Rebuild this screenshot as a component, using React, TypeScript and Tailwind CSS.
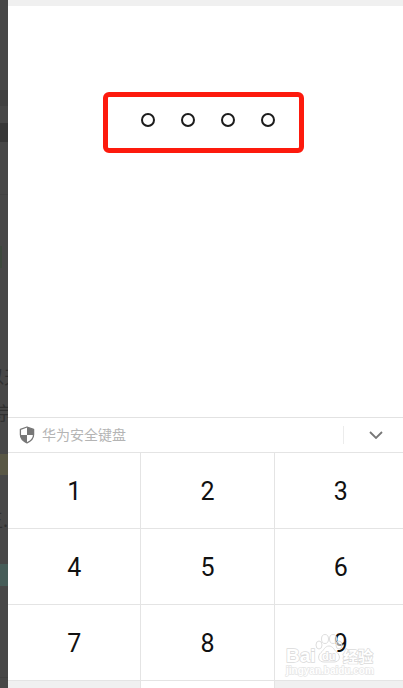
import React, { useState } from "react";

const KEYS = ["1", "2", "3", "4", "5", "6", "7", "8", "9"];
const CODE_LENGTH = 4;

const ShieldIcon: React.FC = () => (
  <svg viewBox="0 0 16 18" className="h-[18px] w-4" aria-hidden="true">
    <path d="M8 1 1.4 3.4v5.2c0 3.8 2.8 6.6 6.6 8.2 3.8-1.6 6.6-4.4 6.6-8.2V3.4z" fill="#fff" stroke="#777" strokeWidth="1.3" strokeLinejoin="round" />
    <path d="M8 1v8h6.6V3.4z" fill="#777" />
    <path d="M8 9v7.8C4.2 15.2 1.5 12.5 1.4 9z" fill="#777" />
  </svg>
);

const Watermark: React.FC = () => (
  <svg viewBox="0 0 96 46" className="pointer-events-none absolute right-6 bottom-2 h-[46px] w-24" aria-hidden="true">
    <g fill="#fff" fillOpacity="0.6" stroke="#dedede" strokeWidth="1">
      <ellipse cx="36" cy="11" rx="3" ry="4" />
      <ellipse cx="42" cy="5" rx="3.5" ry="4.5" />
      <ellipse cx="50" cy="5" rx="3.5" ry="4.5" />
      <ellipse cx="56" cy="11" rx="3" ry="4" />
      <path d="M46 12c-4 0-5 4-8 6.500-4 3.500-3 9.500 3 9.500h10c6 0 7-6 3-9.500C51 16 50 12 46 12z" />
    </g>
    <g fill="#fff" stroke="#dadada" strokeWidth="1.4" paintOrder="stroke" fontWeight="bold">
      <text x="3" y="28" fontSize="19" fontFamily="Liberation Sans, sans-serif">Bai</text>
      <text x="39" y="26" fontSize="11" fontFamily="Liberation Sans, sans-serif">du</text>
      <text x="60" y="28" fontSize="15" fontFamily="Noto Sans CJK SC, sans-serif">经验</text>
      <text x="3" y="40" fontSize="10" fontFamily="Liberation Sans, sans-serif" stroke="#e6e6e6">jingyan.baidu.com</text>
    </g>
  </svg>
);

// Franja de la página que queda detrás, oscurecida
const BackPage: React.FC = () => (
  <aside aria-hidden="true" className="w-2 shrink-0 overflow-hidden bg-[#474747] font-['Noto_Sans_CJK_SC',sans-serif] text-[#303030]">
    <div className="h-[90px]" />
    <div className="h-4 bg-[#414141]" />
    <div className="h-[17px]" />
    <div className="h-[19px] bg-[#373737]" />
    <div className="h-[53px] border-b border-[#424242]" />
    <div className="h-[51px]" />
    <div className="h-[22px] w-0.5 bg-[#3d483d]" />
    <div className="h-24" />
    <div className="flex h-6 justify-center text-lg leading-6 whitespace-nowrap">以天</div>
    <div className="h-3" />
    <div className="flex h-6 justify-center text-lg leading-6">京</div>
    <div className="h-[30px]" />
    <div className="h-[21px] bg-[#595745]" />
    <div className="h-8" />
    <div className="flex h-6 justify-end text-lg leading-6 whitespace-nowrap">王.</div>
    <div className="h-[33px]" />
    <div className="h-[22px] bg-[#465c58]" />
    <div className="h-[92px] border-b border-[#414141]" />
  </aside>
);

const App: React.FC = () => {
  const [code, setCode] = useState<string>("");

  const handleKey = (key: string) => {
    setCode((prev) => (prev.length < CODE_LENGTH ? prev + key : prev));
  };

  return (
    <div className="flex h-screen overflow-hidden bg-white font-[Roboto,'Noto_Sans_CJK_SC',sans-serif]">
      <BackPage />
      <div className="relative flex min-w-0 flex-1 flex-col overflow-hidden">
        <div className="h-1.5 shrink-0 bg-[#f0f0f0]" />

        {/* Código */}
        <main className="flex flex-1 items-start justify-center pt-[86px] pr-1">
          <div className="flex h-[61px] w-[201px] items-start justify-center gap-[26px] rounded-md border-[5px] border-[#fd1a0d] pt-4 pl-2">
            {Array.from({ length: CODE_LENGTH }, (_, i) => (
              <span
                key={i}
                className={`size-3.5 rounded-full border-2 border-[#1c1c1c] ${i < code.length ? "bg-[#1c1c1c]" : ""}`}
              />
            ))}
          </div>
        </main>

        {/* Teclado */}
        <section className="shrink-0 border-t border-[#e2e2e2]">
          <div className="flex h-[34px] items-center pl-[11px]">
            <ShieldIcon />
            <span className="ml-[7px] text-sm text-[#b4b4b4]">华为安全键盘</span>
            <button type="button" aria-label="收起键盘" className="ml-auto flex h-[18px] w-[60px] items-center border-l border-[#ececec] pl-[25px]">
              <svg viewBox="0 0 14 8" className="h-2 w-3.5" fill="none" stroke="#777" strokeWidth="1.8" aria-hidden="true">
                <path d="M1 1l6 6 6-6" />
              </svg>
            </button>
          </div>
          <div className="-mr-1 grid grid-cols-3 gap-px bg-[#e4e4e4] pt-px">
            {KEYS.map((key) => (
              <button
                key={key}
                type="button"
                onClick={() => handleKey(key)}
                className="h-[75px] bg-white pt-0.5 text-[25px] text-[#111]"
              >
                {key}
              </button>
            ))}
            <div className="h-[7px] bg-[#f0f0f0]" />
            <div className="h-[7px] bg-white" />
            <div className="h-[7px] bg-[#f0f0f0]" />
          </div>
        </section>
        <Watermark />
      </div>
    </div>
  );
};

export default App;
